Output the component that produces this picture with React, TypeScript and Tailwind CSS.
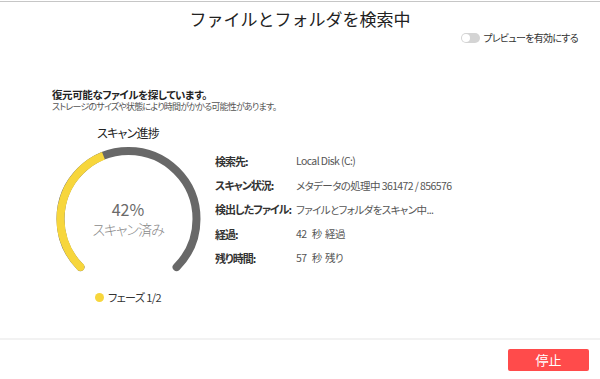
import React from 'react';

const font = "font-['Noto_Sans_CJK_JP','Noto_Sans',sans-serif]";
const palt = "[font-feature-settings:'palt']";

type Row = { label: string; value: string };

const rows: Row[] = [
  { label: '検索先:', value: 'Local Disk (C:)' },
  { label: 'スキャン状況:', value: 'メタデータの処理中 361472 / 856576' },
  { label: '検出したファイル:', value: 'ファイルとフォルダをスキャン中...' },
  { label: '経過:', value: '42   秒  経過' },
  { label: '残り時間:', value: '57   秒  残り' },
];

const Gauge: React.FC<{ percent: number }> = ({ percent }) => {
  const cx = 76.5;
  const cy = 76;
  const r = 68;
  const pt = (deg: number) => {
    const a = (deg * Math.PI) / 180;
    return [cx + r * Math.sin(a), cy - r * Math.cos(a)];
  };
  const [sx, sy] = pt(-135);
  const [ex, ey] = pt(135);
  const [px, py] = pt(-135 + (percent / 100) * 270);

  return (
    <div className="relative w-[152px] h-[130px] mt-[2px]">
      <svg width="152" height="130" viewBox="0 0 152 130">
        <path
          d={`M ${sx} ${sy} A ${r} ${r} 0 1 1 ${ex} ${ey}`}
          fill="none"
          stroke="#686868"
          strokeWidth="8"
          strokeLinecap="round"
        />
        <path
          d={`M ${sx} ${sy} A ${r} ${r} 0 0 1 ${px} ${py}`}
          fill="none"
          stroke="#f7d63c"
          strokeWidth="8"
          strokeLinecap="butt"
        />
        <circle cx={sx} cy={sy} r="4" fill="#f7d63c" />
      </svg>
      <div className="absolute left-0 right-0 top-[56px] flex flex-col items-center">
        <span className="text-[16px] leading-[20px] text-[#6a6a6a]">{percent}%</span>
        <span className="text-[14px] leading-[20px] tracking-[-1px] text-[#8a8a8a] font-light">
          スキャン済み
        </span>
      </div>
    </div>
  );
};

export default function App() {
  return (
    <div className={`${font} ${palt} w-full h-[379px] bg-white flex flex-col text-[#333]`}>
      <div className="h-px mt-px bg-[#c6c6c6]" />

      <div className="pt-[5px] text-center text-[17px] leading-[24px] text-[#222] [font-feature-settings:normal]">
        ファイルとフォルダを検索中
      </div>

      <div className="h-[14px] flex items-center justify-end pr-[22px]">
        <div className="w-[19px] h-[10px] rounded-full bg-[#d4d4d4] flex items-center px-px">
          <div className="w-[8px] h-[8px] rounded-full bg-white" />
        </div>
        <span className="ml-[3px] text-[10px] leading-[14px] tracking-[-0.7px] text-[#333] whitespace-nowrap">
          プレビューを有効にする
        </span>
      </div>

      <div className="mt-[43px] pl-[52px]">
        <div className="text-[10.5px] leading-[13px] tracking-[-0.4px] font-bold text-[#222] whitespace-nowrap">
          復元可能なファイルを探しています。
        </div>
        <div className="text-[9px] leading-[12px] tracking-[-0.8px] text-[#555] whitespace-nowrap">
          ストレージのサイズや状態により時間がかかる可能性があります。
        </div>
      </div>

      <div className="flex pl-[52px]">
        <div className="w-[152px] flex flex-col items-center">
          <div className="mt-[12px] text-[12px] leading-[16px] tracking-[-0.8px] text-[#222]">
            スキャン進捗
          </div>
          <Gauge percent={42} />
          <div className="mt-[16px] h-[16px] flex items-center">
            <span className="w-[9px] h-[9px] rounded-full bg-[#f7d63c]" />
            <span className="ml-[4px] text-[11px] leading-[16px] tracking-[-0.6px] text-[#333] whitespace-pre">
              フェーズ 1/2
            </span>
          </div>
        </div>

        <div className="ml-[11px] mt-[36px] flex flex-col">
          {rows.map((row, i) => (
            <div key={i} className="h-[24.3px] flex items-center whitespace-pre">
              <span className="w-[81px] text-[11px] tracking-[-1px] font-bold text-[#333]">{row.label}</span>
              <span className="text-[10.5px] tracking-[-0.6px] text-[#555]">{row.value}</span>
            </div>
          ))}
        </div>
      </div>

      <div className="mt-auto h-[41px] border-t-2 border-[#f2f2f2] flex justify-end items-start pt-[9px] pr-[11px]">
        <button className="w-[81px] h-[22px] rounded-[2px] bg-[#ff4b4b] text-white text-[13px] leading-[22px]">
          停止
        </button>
      </div>
    </div>
  );
}
